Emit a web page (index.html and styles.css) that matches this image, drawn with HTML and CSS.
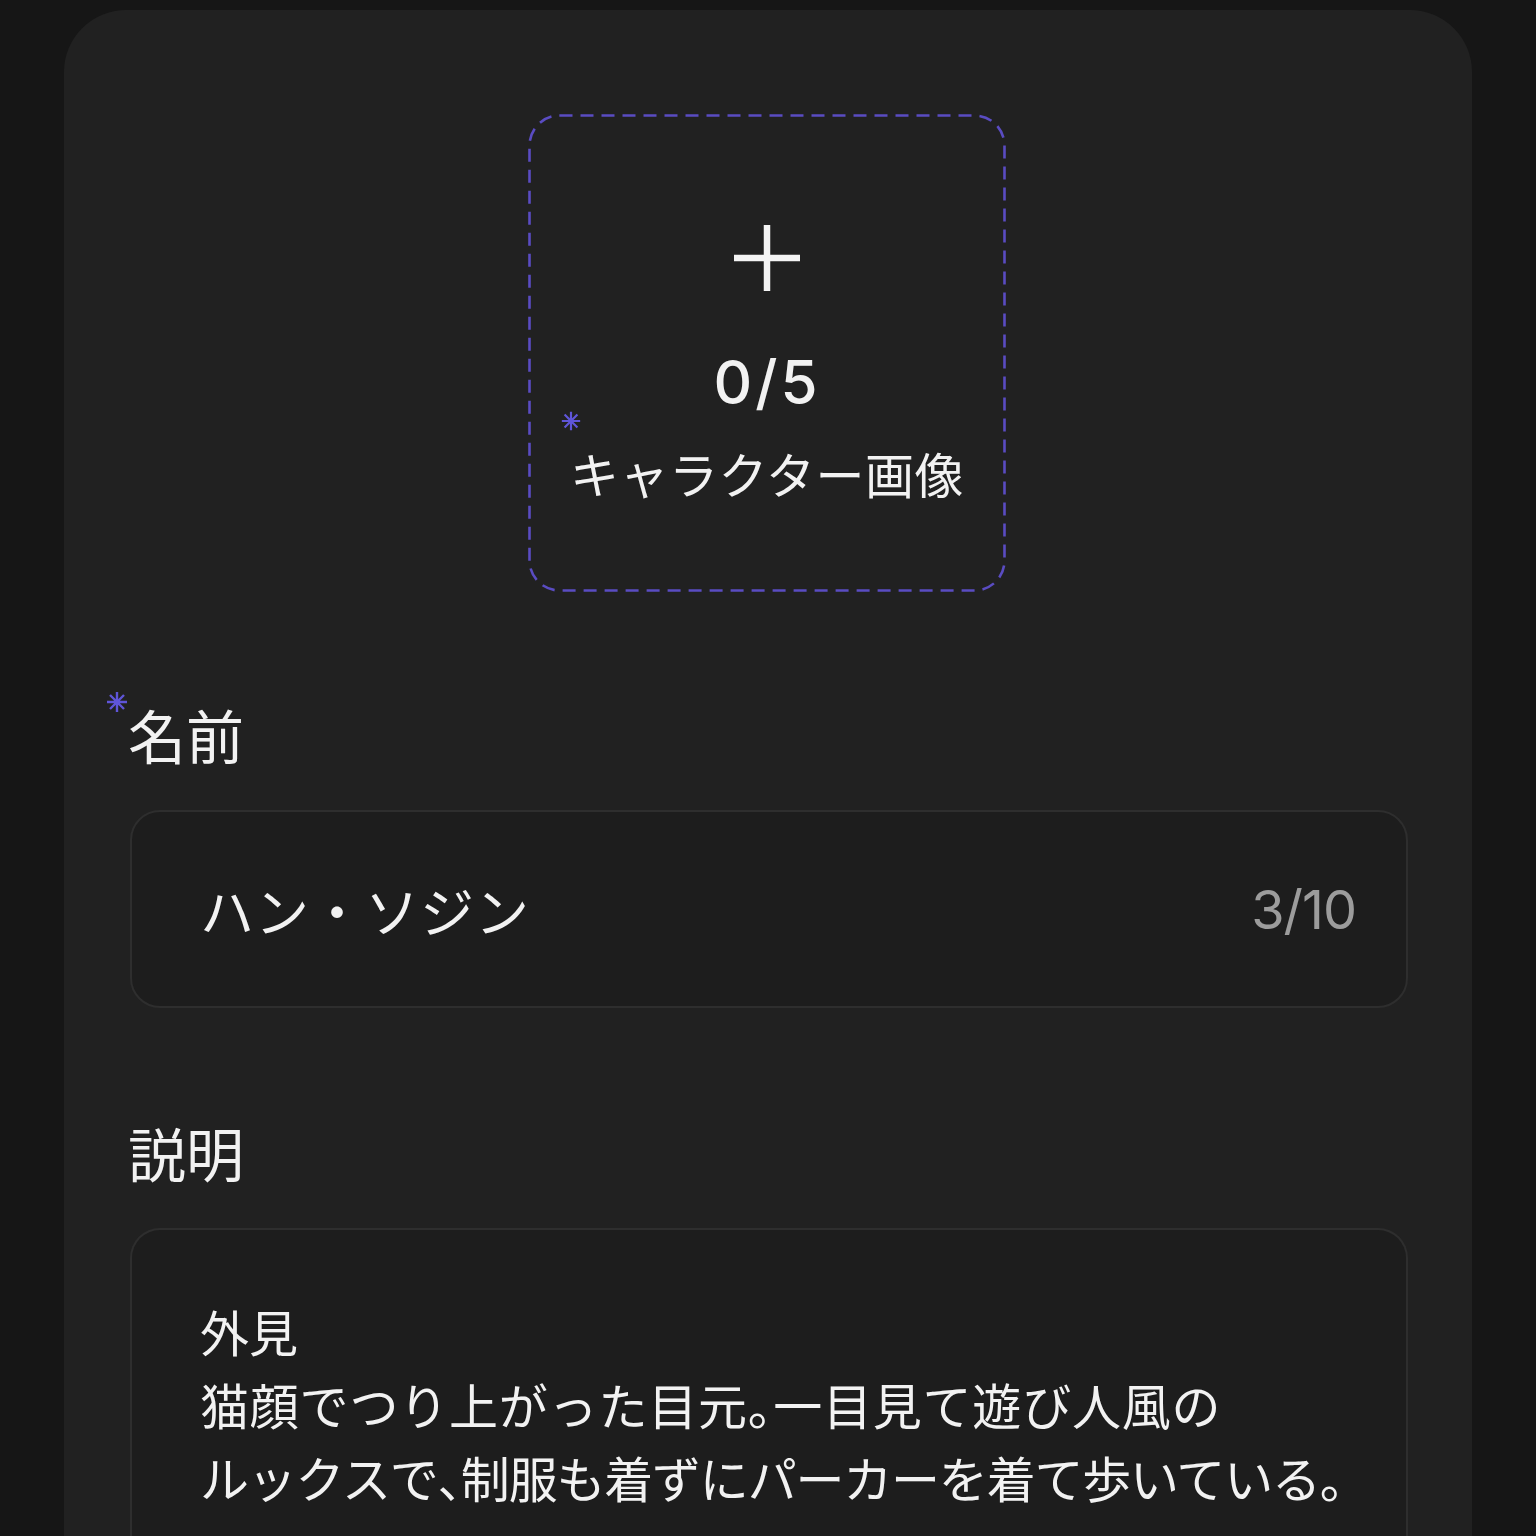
FILE: index.html
```html
<!DOCTYPE html>
<html lang="ja">
<head>
<meta charset="utf-8">
<link rel="stylesheet" href="styles.css">
</head>
<body>
<main class="card">
  <div class="upload">
    <svg class="upload-frame" viewBox="0 0 478 478" aria-hidden="true">
      <rect x="1.5" y="1.5" width="475" height="475" rx="30" ry="30" fill="none" stroke="#5a4cc2" stroke-width="2.6" stroke-dasharray="13 8"/>
    </svg>
    <svg class="plus" viewBox="0 0 70 70" aria-hidden="true">
      <path d="M35 2 V68 M2 35 H68" stroke="#f4f4f4" stroke-width="6.5" fill="none"/>
    </svg>
    <div class="count">0/5</div>
    <div class="upload-label"><span class="req">
      <svg class="star" viewBox="0 0 24 24" aria-hidden="true"><path d="M12 2 V22 M2 12 H22 M5 5 L19 19 M19 5 L5 19" stroke="#5f55d8" stroke-width="2.4" fill="none"/></svg>キャラクター画像</span></div>
  </div>

  <div class="field-label name-label"><span class="req">
    <svg class="star star-lg" viewBox="0 0 24 24" aria-hidden="true"><path d="M12 2 V22 M2 12 H22 M5 5 L19 19 M19 5 L5 19" stroke="#5f55d8" stroke-width="2.4" fill="none"/></svg>名前</span></div>
  <div class="input">
    <span class="value">ハン・ソジン</span>
    <span class="counter">3/10</span>
  </div>

  <div class="field-label desc-label">説明</div>
  <div class="textarea">
    <p>外見</p>
    <p class="line2">猫顔でつり上がった目元<span class="punct">。</span>一目見て遊び人風の</p>
    <p class="line3">ルックスで<span class="punct">、</span>制服も着ずにパーカーを着て歩いている<span class="punct">。</span></p>
  </div>
</main>
</body>
</html>
```
FILE: styles.css
```css
html, body {
  margin: 0;
  padding: 0;
  background: #161616;
  height: 1536px;
  overflow: hidden;
}
body {
  font-family: Inter, "Noto Sans CJK JP", sans-serif;
  color: #f2f2f2;
}
.card {
  margin: 10px 64px 0 64px;
  background: #212121;
  border-radius: 62px 62px 0 0;
  padding: 104px 64px 200px 66px;
  min-height: 1400px;
  display: flex;
  flex-direction: column;
}
.upload {
  position: relative;
  width: 478px;
  height: 478px;
  align-self: center;
  margin-left: -4px;
  display: flex;
  flex-direction: column;
  align-items: center;
  box-sizing: border-box;
  padding-top: 109px;
}
.upload-frame {
  position: absolute;
  inset: 0;
  width: 478px;
  height: 478px;
}
.plus {
  width: 70px;
  height: 70px;
  display: block;
}
.count {
  margin-top: 54px;
  font-size: 60px;
  line-height: 70px;
  font-weight: 500;
  letter-spacing: 3px;
}
.upload-label {
  margin-top: 26px;
  font-family: "Noto Sans CJK JP", sans-serif;
  font-size: 49px;
  line-height: 60px;
  letter-spacing: 0.5px;
}
.req {
  position: relative;
  display: inline-block;
}
.star {
  position: absolute;
  width: 22px;
  height: 22px;
  left: -10px;
  top: -33px;
}
.star-lg {
  width: 24px;
  height: 24px;
  left: -23px;
  top: -10px;
}
.field-label {
  font-family: "Noto Sans CJK JP", sans-serif;
  font-size: 58px;
  line-height: 68px;
  margin-left: -2px;
}
.name-label {
  margin-top: 108px;
}
.desc-label {
  margin-top: 110px;
}
.input {
  margin-top: 42px;
  height: 198px;
  box-sizing: border-box;
  border: 2px solid #2e2e2e;
  border-radius: 30px;
  background: #1d1d1d;
  display: flex;
  align-items: center;
  justify-content: space-between;
  padding: 0 50px 0 68px;
}
.value {
  font-family: "Noto Sans CJK JP", sans-serif;
  font-size: 54px;
  letter-spacing: 1px;
  font-weight: 400;
}
.counter {
  font-size: 54px;
  color: #9c9c9c;
  letter-spacing: -1px;
}
.textarea {
  margin-top: 42px;
  min-height: 400px;
  box-sizing: border-box;
  border: 2px solid #2e2e2e;
  border-bottom: none;
  border-radius: 30px 30px 0 0;
  background: #1d1d1d;
  padding: 64px 40px 0 68px;
  font-family: "Noto Sans CJK JP", sans-serif;
  font-size: 49px;
  line-height: 73px;
}
.textarea p {
  margin: 0;
  white-space: nowrap;
}
.line2 {
  letter-spacing: 0.8px;
}
.line3 {
  letter-spacing: -1.2px;
}
.punct {
  font-feature-settings: "halt";
}
```
